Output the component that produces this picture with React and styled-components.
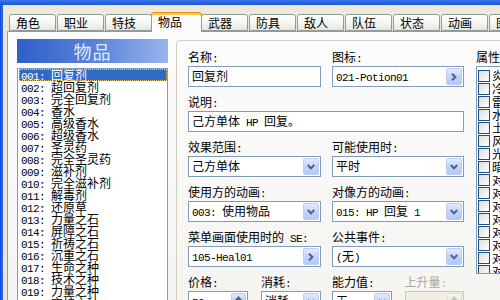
import React from 'react';
import styled, { createGlobalStyle } from 'styled-components';

const GlobalStyle = createGlobalStyle`
  html, body { margin: 0; padding: 0; }
  body {
    font-family: "Noto Sans CJK SC", "Liberation Sans", sans-serif;
    font-size: 12px;
    color: #000;
  }
`;

const Window = styled.div`
  width: 500px;
  height: 300px;
  overflow: hidden;
  display: flex;
  flex-direction: column;
  background: #ece9d8;
`;

const TitleStrip = styled.div`
  flex: none;
  height: 5px;
  background: linear-gradient(#3a78ea, #1d54d3);
`;

const Body = styled.div`
  flex: 1;
  min-height: 0;
  display: flex;
`;

const FrameEdge = styled.div`
  flex: none;
  width: 3px;
  background: linear-gradient(90deg, #0a3ed8, #2f6de8 60%, #1f58d8);
`;

const Main = styled.div`
  flex: 1;
  min-width: 0;
  display: flex;
  flex-direction: column;
  padding: 7px 0 0 4px;
`;

const TabRow = styled.div`
  flex: none;
  height: 19px;
  display: flex;
  align-items: flex-end;
  padding-left: 2px;
  position: relative;
  z-index: 1;
`;

const Tab = styled.div`
  flex: none;
  box-sizing: border-box;
  width: ${p => (p.$active ? 51 : 47)}px;
  height: ${p => (p.$active ? 20 : 17)}px;
  margin: ${p => (p.$active ? '0 -1px -1px -2px' : '0 1px 0 0')};
  padding-left: 6px;
  border: 1px solid #919b9c;
  border-bottom: ${p => (p.$active ? 'none' : '1px solid #919b9c')};
  border-radius: 3px 3px 0 0;
  background: ${p =>
    p.$active ? '#fcfcfe' : 'linear-gradient(#ffffff, #f3f3ef 60%, #e6e5de)'};
  box-shadow: ${p => (p.$active ? 'inset 0 2px 0 #ffc83c' : 'none')};
  border-top-color: ${p => (p.$active ? '#e68b2c' : '#919b9c')};
  font-size: 12px;
  line-height: ${p => (p.$active ? 17 : 15)}px;
  white-space: nowrap;
  overflow: hidden;
`;

const Panel = styled.div`
  flex: 1;
  display: flex;
  align-items: flex-start;
  gap: 8px;
  margin: 0 -30px -30px 0;
  padding: 7px 0 0 9px;
  border: 1px solid #919b9c;
  background: linear-gradient(#fcfcfe, #f4f3ee);
`;

const LeftCol = styled.div`
  flex: none;
  width: 151px;
  display: flex;
  flex-direction: column;
  gap: 5px;
`;

const Header = styled.div`
  height: 24px;
  line-height: 24px;
  text-align: center;
  font-size: 18px;
  color: #e4e9f7;
  background: linear-gradient(90deg, #2f5fc8, #5d86da 55%, #98b4ec);
  letter-spacing: 1px;
`;

const ListBox = styled.div`
  box-sizing: border-box;
  height: 260px;
  border: 1px solid #7f9db9;
  background: #fff;
  overflow: hidden;
`;

const ListRow = styled.div`
  height: 12px;
  line-height: 12px;
  margin-left: 1px;
  padding-left: 2px;
  white-space: nowrap;
  background: ${p => (p.$selected ? '#316ac5' : 'transparent')};
  color: ${p => (p.$selected ? '#fff' : '#000')};
  outline: ${p => (p.$selected ? '1px dotted #e9c46a' : 'none')};
  outline-offset: -1px;
`;

const Group = styled.div`
  flex: none;
  width: 400px;
  height: 300px;
  margin-top: 1px;
  box-sizing: border-box;
  border: 1px solid #d0d0bf;
  border-radius: 4px;
  padding: 7px 0 0 11px;
  display: flex;
  align-items: flex-start;
`;

const FormGrid = styled.div`
  flex: none;
  display: grid;
  grid-template-columns: 133px 132px;
  column-gap: 11px;
  row-gap: 6px;
`;

const Field = styled.div`
  display: flex;
  flex-direction: column;
  min-width: 0;
  grid-column: ${p => (p.$wide ? '1 / -1' : 'auto')};
`;

const Pair = styled.div`
  display: grid;
  grid-template-columns: 1fr 1fr;
  column-gap: 13px;
`;

const Label = styled.div`
  height: 17px;
  line-height: 17px;
  margin-bottom: 1px;
  white-space: nowrap;
  color: ${p => (p.$disabled ? '#aca899' : '#000')};
`;

const Box = styled.div`
  box-sizing: border-box;
  height: 21px;
  display: flex;
  align-items: center;
  padding-left: 3px;
  border: 1px solid ${p => (p.$disabled ? '#c9c7ba' : '#7f9db9')};
  background: ${p => (p.$disabled ? '#f1efe4' : '#fff')};
  white-space: nowrap;
  overflow: hidden;
`;

const BoxText = styled.span`
  flex: 1;
  min-width: 0;
  align-self: flex-start;
  display: block;
  margin-top: 2px;
  height: 14px;
  line-height: 13px;
  overflow: hidden;
`;

const XpButton = styled.span`
  flex: none;
  box-sizing: border-box;
  width: 16px;
  height: 17px;
  margin-right: 1px;
  display: flex;
  align-items: center;
  justify-content: center;
  border: 1px solid #bccdf4;
  border-radius: 2px;
  background: linear-gradient(#e2eafe, #c3d3fb 50%, #b4c8f7);
`;

const SpinCol = styled.span`
  flex: none;
  align-self: flex-start;
  margin: 1px 1px 0 0;
  display: flex;
  flex-direction: column;
  gap: 1px;
`;

const SpinButton = styled.span`
  box-sizing: border-box;
  width: 15px;
  height: 9px;
  display: flex;
  align-items: center;
  justify-content: center;
  border: 1px solid ${p => (p.$disabled ? '#e0ded4' : '#bccdf4')};
  border-radius: 2px;
  background: ${p =>
    p.$disabled ? 'linear-gradient(#f7f6f1, #ebeae3)' : 'linear-gradient(#e2eafe, #bccff9)'};
`;

const AttrCol = styled.div`
  flex: none;
  margin-left: 12px;
  display: flex;
  flex-direction: column;
`;

const AttrBox = styled.div`
  box-sizing: border-box;
  width: 120px;
  height: 208px;
  padding-top: 2px;
  border: 1px solid #7f9db9;
  background: #fff;
  overflow: hidden;
`;

const AttrRow = styled.div`
  height: 13px;
  display: flex;
  align-items: center;
  white-space: nowrap;
`;

const Check = styled.span`
  flex: none;
  box-sizing: border-box;
  width: 12px;
  height: 12px;
  margin: 0 2px 0 1px;
  border: 1px solid #1c5180;
  background: linear-gradient(135deg, #dcdcd7, #ffffff);
`;

const Half = styled.span`
  font-family: "Liberation Mono", "DejaVu Sans Mono", monospace;
  font-size: 11px;
  letter-spacing: -0.6px;
  white-space: pre;
`;

function T({ children }) {
  const parts = String(children).split(/([\x20-\x7E]+)/);
  return parts.map((p, i) => {
    if (!p) return null;
    if (/^[\x20-\x7E]+$/.test(p)) return <Half key={i}>{p}</Half>;
    return <React.Fragment key={i}>{p}</React.Fragment>;
  });
}

const Chevron = ({ dir, color = '#4d6185' }) =>
  dir === 'right' ? (
    <svg width="6" height="8" viewBox="0 0 6 8">
      <path d="M1 0.8 L4.4 4 L1 7.2" fill="none" stroke={color} strokeWidth="2" />
    </svg>
  ) : (
    <svg width="8" height="6" viewBox="0 0 8 6">
      <path d="M0.8 1 L4 4.4 L7.2 1" fill="none" stroke={color} strokeWidth="2" />
    </svg>
  );

const Tri = ({ color = '#4d6185' }) => (
  <svg width="7" height="4" viewBox="0 0 7 4">
    <path d="M0 4 L3.5 0 L7 4 Z" fill={color} />
  </svg>
);

function Input({ value, button, disabled }) {
  return (
    <Box $disabled={disabled}>
      <BoxText><T>{value}</T></BoxText>
      {button === 'drop' && (
        <XpButton><Chevron dir="down" /></XpButton>
      )}
      {button === 'more' && (
        <XpButton><Chevron dir="right" /></XpButton>
      )}
      {button === 'spin' && (
        <SpinCol>
          <SpinButton $disabled={disabled}><Tri color={disabled ? '#c9c7ba' : '#4d6185'} /></SpinButton>
          <SpinButton $disabled={disabled} />
        </SpinCol>
      )}
    </Box>
  );
}

function FormField({ label, wide, disabled, ...rest }) {
  return (
    <Field $wide={wide}>
      <Label $disabled={disabled}><T>{label}</T></Label>
      <Input disabled={disabled} {...rest} />
    </Field>
  );
}

const tabs = ['角色', '职业', '特技', '物品', '武器', '防具', '敌人', '队伍', '状态', '动画', '图块'];

const items = [
  '回复剂', '超回复剂', '完全回复剂', '香水', '高级香水', '超级香水', '圣灵药',
  '完全圣灵药', '滋补剂', '完全滋补剂', '解毒剂', '还原草', '力量之石', '屏障之石',
  '祈祷之石', '沉重之石', '生命之种', '技术之种', '力量之种', '守护之种',
];

const attrs = [
  '炎', '冷气', '雷', '水', '土', '风', '光', '暗',
  '对动物', '对昆虫', '对不死', '对人类', '对龙', '对天使', '对恶魔', '对魔法',
];

export default function App() {
  return (
    <>
      <GlobalStyle />
      <Window>
        <TitleStrip />
        <Body>
          <FrameEdge />
          <Main>
            <TabRow>
              {tabs.map(t => (
                <Tab key={t} $active={t === '物品'}>{t}</Tab>
              ))}
            </TabRow>
            <Panel>
              <LeftCol>
                <Header>物品</Header>
                <ListBox>
                  {items.map((name, i) => (
                    <ListRow key={i} $selected={i === 0}>
                      <T>{`${String(i + 1).padStart(3, '0')}: ${name}`}</T>
                    </ListRow>
                  ))}
                </ListBox>
              </LeftCol>
              <Group>
                <FormGrid>
                  <FormField label="名称:" value="回复剂" />
                  <FormField label="图标:" value="021-Potion01" button="more" />
                  <FormField wide label="说明:" value="己方单体 HP 回复。" />
                  <FormField label="效果范围:" value="己方单体" button="drop" />
                  <FormField label="可能使用时:" value="平时" button="drop" />
                  <FormField label="使用方的动画:" value="003: 使用物品" button="drop" />
                  <FormField label="对像方的动画:" value="015: HP 回复 1" button="drop" />
                  <FormField label="菜单画面使用时的 SE:" value="105-Heal01" button="more" />
                  <FormField label="公共事件:" value="(无)" button="drop" />
                  <Pair>
                    <FormField label="价格:" value="50" button="spin" />
                    <FormField label="消耗:" value="消耗" button="drop" />
                  </Pair>
                  <Pair>
                    <FormField label="能力值:" value="无" button="drop" />
                    <FormField label="上升量:" value="" button="spin" disabled />
                  </Pair>
                </FormGrid>
                <AttrCol>
                  <Label>属性</Label>
                  <AttrBox>
                    {attrs.map(a => (
                      <AttrRow key={a}>
                        <Check />
                        {a}
                      </AttrRow>
                    ))}
                  </AttrBox>
                </AttrCol>
              </Group>
            </Panel>
          </Main>
        </Body>
      </Window>
    </>
  );
}
